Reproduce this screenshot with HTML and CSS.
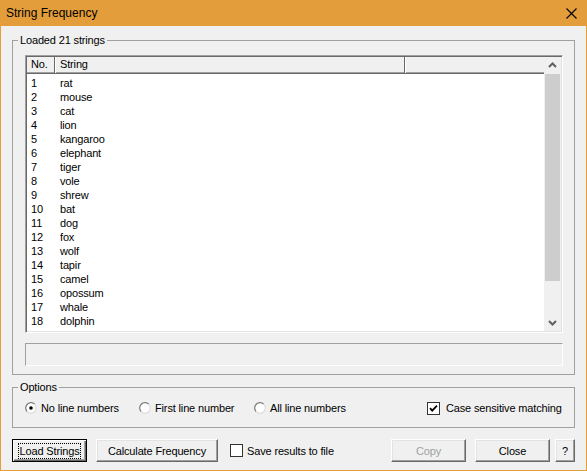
FILE: index.html
```html
<!DOCTYPE html>
<html lang="en">
<head>
    <meta charset="UTF-8">
    <title>String Frequency</title>
    <link rel="stylesheet" href="styles.css">
</head>
<body>
    <div class="window">
        <div class="titlebar">
            <span class="title">String Frequency</span>
            <svg class="close-icon" width="11" height="11" viewBox="0 0 11 11">
                <path d="M0.5 0.5 L10.5 10.5 M10.5 0.5 L0.5 10.5" stroke="#000" stroke-width="1.1" fill="none"/>
            </svg>
        </div>

        <div class="client">
            <fieldset class="group strings-group">
                <legend>Loaded 21 strings</legend>
                <div class="listbox">
                    <div class="list-main">
                        <div class="list-header">
                            <div class="col col-no">No.</div>
                            <div class="col col-str">String</div>
                            <div class="col col-rest"></div>
                        </div>
                        <div class="list-rows">
                            <div class="row"><span class="num">1</span><span>rat</span></div>
                            <div class="row"><span class="num">2</span><span>mouse</span></div>
                            <div class="row"><span class="num">3</span><span>cat</span></div>
                            <div class="row"><span class="num">4</span><span>lion</span></div>
                            <div class="row"><span class="num">5</span><span>kangaroo</span></div>
                            <div class="row"><span class="num">6</span><span>elephant</span></div>
                            <div class="row"><span class="num">7</span><span>tiger</span></div>
                            <div class="row"><span class="num">8</span><span>vole</span></div>
                            <div class="row"><span class="num">9</span><span>shrew</span></div>
                            <div class="row"><span class="num">10</span><span>bat</span></div>
                            <div class="row"><span class="num">11</span><span>dog</span></div>
                            <div class="row"><span class="num">12</span><span>fox</span></div>
                            <div class="row"><span class="num">13</span><span>wolf</span></div>
                            <div class="row"><span class="num">14</span><span>tapir</span></div>
                            <div class="row"><span class="num">15</span><span>camel</span></div>
                            <div class="row"><span class="num">16</span><span>opossum</span></div>
                            <div class="row"><span class="num">17</span><span>whale</span></div>
                            <div class="row"><span class="num">18</span><span>dolphin</span></div>
                            <div class="row"><span class="num">19</span><span>lion</span></div>
                        </div>
                    </div>
                    <div class="scrollbar">
                        <div class="sb-arrow">
                            <svg width="17" height="17" viewBox="0 0 17 17">
                                <path d="M5 10 L8.5 6.5 L12 10" stroke="#606060" stroke-width="2" fill="none"/>
                            </svg>
                        </div>
                        <div class="sb-track">
                            <div class="sb-thumb"></div>
                        </div>
                        <div class="sb-arrow">
                            <svg width="17" height="17" viewBox="0 0 17 17">
                                <path d="M5 7 L8.5 10.5 L12 7" stroke="#606060" stroke-width="2" fill="none"/>
                            </svg>
                        </div>
                    </div>
                </div>
                <div class="status"></div>
            </fieldset>

            <fieldset class="group options-group">
                <legend>Options</legend>
                <div class="options-row">
                    <label class="opt opt-1">
                        <svg class="radio" width="12" height="12" viewBox="0 0 12 12">
                            <defs>
                                <linearGradient id="rb" x1="0" y1="0" x2="1" y2="1">
                                    <stop offset="0.5" stop-color="#777"/>
                                    <stop offset="0.5" stop-color="#dcdcdc"/>
                                </linearGradient>
                            </defs>
                            <circle cx="6" cy="6" r="5.3" fill="#fff" stroke="url(#rb)" stroke-width="1.2"/>
                            <circle cx="6" cy="6" r="1.8" fill="#000"/>
                        </svg>
                        No line numbers
                    </label>
                    <label class="opt opt-2">
                        <svg class="radio" width="12" height="12" viewBox="0 0 12 12">
                            <circle cx="6" cy="6" r="5.3" fill="#fff" stroke="url(#rb)" stroke-width="1.2"/>
                        </svg>
                        First line number
                    </label>
                    <label class="opt opt-3">
                        <svg class="radio" width="12" height="12" viewBox="0 0 12 12">
                            <circle cx="6" cy="6" r="5.3" fill="#fff" stroke="url(#rb)" stroke-width="1.2"/>
                        </svg>
                        All line numbers
                    </label>
                    <label class="opt">
                        <svg class="check" width="13" height="13" viewBox="0 0 13 13">
                            <rect x="0.5" y="0.5" width="12" height="12" fill="#fff" stroke="#333"/>
                            <path d="M3 6.2 L5.2 8.6 L10 3.6" stroke="#000" stroke-width="1.8" fill="none"/>
                        </svg>
                        Case sensitive matching
                    </label>
                </div>
            </fieldset>

            <div class="buttons">
                <button class="btn btn-default"><span class="focus">Load Strings</span></button>
                <button class="btn btn-calc">Calculate Frequency</button>
                <label class="opt save-opt">
                    <svg class="check" width="13" height="13" viewBox="0 0 13 13">
                        <rect x="0.5" y="0.5" width="12" height="12" fill="#fff" stroke="#333"/>
                    </svg>
                    Save results to file
                </label>
                <button class="btn btn-copy" disabled>Copy</button>
                <button class="btn btn-close">Close</button>
                <button class="btn btn-help">?</button>
            </div>
        </div>
    </div>
</body>
</html>
```

FILE: styles.css
```css
body {
    margin: 0;
    font-family: "Liberation Sans", Arial, sans-serif;
    font-size: 11px;
    letter-spacing: -0.15px;
    color: #000;
}
.window {
    width: 587px;
    height: 471px;
    box-sizing: border-box;
    border: 1px solid #e39d3b;
    border-top: 0;
    background: #f0f0f0;
    display: flex;
    flex-direction: column;
}
.titlebar {
    height: 26px;
    flex-shrink: 0;
    background: #e39d3b;
    display: flex;
    align-items: center;
    justify-content: space-between;
    padding: 0 9px 0 5px;
}
.title {
    font-size: 12px;
    letter-spacing: 0;
}
.client {
    flex: 1;
    padding: 0 11px 8px 11px;
    display: flex;
    flex-direction: column;
}
.group {
    margin: 7px 0 0;
    border: 1px solid #a0a0a0;
    min-width: 0;
}
.group legend {
    padding: 0 2px;
    margin-left: -7px;
    line-height: 14px;
}
.strings-group {
    padding: 8px 11px 8px 12px;
}
.listbox {
    height: 278px;
    box-sizing: border-box;
    border: 1px solid;
    border-color: #a0a0a0 #fff #fff #a0a0a0;
    box-shadow: inset 1px 1px #696969, inset -1px -1px #e3e3e3;
    padding: 1px;
    display: flex;
    background: #fff;
}
.list-main {
    flex: 1;
    display: flex;
    flex-direction: column;
    min-width: 0;
}
.list-header {
    height: 17px;
    box-sizing: border-box;
    display: flex;
    background: #f0f0f0;
    border-bottom: 1px solid #696969;
    box-shadow: inset 0 -1px #a0a0a0;
}
.col {
    line-height: 15px;
    box-sizing: border-box;
    border-left: 1px solid #fff;
    border-right: 1px solid #696969;
    padding-left: 4px;
}
.col-no {
    width: 28px;
    border-left: 0;
}
.col-str {
    width: 350px;
}
.col-rest {
    flex: 1;
    border-right: 0;
}
.list-rows {
    flex: 1;
    overflow: hidden;
    padding-top: 2px;
}
.row {
    display: flex;
    height: 14px;
    line-height: 14px;
}
.num {
    width: 29px;
    padding-left: 4px;
}
.scrollbar {
    width: 17px;
    display: flex;
    flex-direction: column;
    background: #f0f0f0;
}
.sb-arrow {
    height: 17px;
}
.sb-arrow svg {
    display: block;
}
.sb-track {
    flex: 1;
}
.sb-thumb {
    height: 207px;
    margin: 0 1px;
    background: #cdcdcd;
}
.status {
    height: 23px;
    margin-top: 10px;
    box-sizing: border-box;
    border: 1px solid;
    border-color: #a0a0a0 #fff #fff #a0a0a0;
}
.options-group {
    margin-top: 5px;
    padding: 7px 11px 12px 12px;
}
.options-row {
    display: flex;
    align-items: center;
    height: 14px;
}
.opt {
    display: flex;
    align-items: center;
    white-space: nowrap;
}
.radio {
    margin-right: 4px;
}
.check {
    margin-right: 6px;
}
.opt-1 {
    width: 114px;
}
.opt-2 {
    width: 115px;
}
.opt-3 {
    width: 173px;
}
.buttons {
    margin-top: 11px;
    display: flex;
    align-items: center;
}
.btn {
    height: 23px;
    width: 75px;
    box-sizing: border-box;
    padding: 0;
    font: inherit;
    letter-spacing: inherit;
    color: #000;
    background: #f0f0f0;
    border: 1px solid;
    border-color: #fff #696969 #696969 #fff;
    box-shadow: inset -1px -1px #a0a0a0, inset 1px 1px #e3e3e3;
}
.btn-default {
    border-color: #000;
    box-shadow: inset 1px 1px #fff, inset -1px -1px #696969, inset -2px -2px #a0a0a0;
}
.focus {
    border: 1px dotted #000;
    padding: 1px 1px;
}
.btn-calc {
    width: 122px;
    margin-left: 9px;
}
.save-opt {
    margin-left: 12px;
}
.save-opt .check {
    margin-right: 4px;
}
.btn-copy {
    margin-left: auto;
    color: #a0a0a0;
}
.btn-close {
    margin-left: 9px;
}
.btn-help {
    width: 20px;
    margin-left: 5px;
}
```
